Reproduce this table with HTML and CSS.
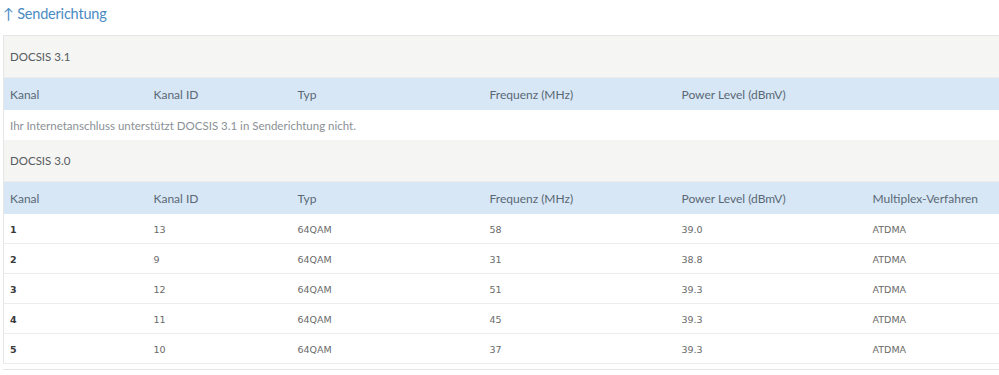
FILE: index.html
```html
<!DOCTYPE html>
<html lang="de">
<head>
<meta charset="utf-8">
<link rel="stylesheet" href="styles.css">
</head>
<body>
<div class="page">
  <h2 class="title">↑ Senderichtung</h2>
  <table class="tbl">
    <colgroup>
      <col class="c1"><col class="c2"><col class="c3"><col class="c4"><col class="c5"><col class="c6">
    </colgroup>
    <tr class="sec"><td colspan="6">DOCSIS 3.1</td></tr>
    <tr class="head"><td>Kanal</td><td>Kanal ID</td><td>Typ</td><td>Frequenz (MHz)</td><td>Power Level (dBmV)</td><td></td></tr>
    <tr class="msg"><td colspan="6">Ihr Internetanschluss unterstützt DOCSIS 3.1 in Senderichtung nicht.</td></tr>
    <tr class="sec"><td colspan="6">DOCSIS 3.0</td></tr>
    <tr class="head"><td>Kanal</td><td>Kanal ID</td><td>Typ</td><td>Frequenz (MHz)</td><td>Power Level (dBmV)</td><td>Multiplex-Verfahren</td></tr>
    <tr class="row"><td class="k">1</td><td>13</td><td>64QAM</td><td>58</td><td>39.0</td><td>ATDMA</td></tr>
    <tr class="row"><td class="k">2</td><td>9</td><td>64QAM</td><td>31</td><td>38.8</td><td>ATDMA</td></tr>
    <tr class="row"><td class="k">3</td><td>12</td><td>64QAM</td><td>51</td><td>39.3</td><td>ATDMA</td></tr>
    <tr class="row"><td class="k">4</td><td>11</td><td>64QAM</td><td>45</td><td>39.3</td><td>ATDMA</td></tr>
    <tr class="row"><td class="k">5</td><td>10</td><td>64QAM</td><td>37</td><td>39.3</td><td>ATDMA</td></tr>
  </table>
  <div class="next"></div>
</div>
</body>
</html>
```

FILE: styles.css
```css
html, body {
  margin: 0;
  padding: 0;
  background: #ffffff;
  overflow: hidden;
}
.page {
  width: 999px;
  height: 375px;
  overflow: hidden;
  padding-left: 3px;
  box-sizing: border-box;
  font-family: Lato, "Open Sans", sans-serif;
}
.title {
  margin: 0;
  padding-top: 5px;
  height: 35px;
  box-sizing: border-box;
  font-size: 14.5px;
  font-weight: normal;
  color: #4b8bc3;
  letter-spacing: -0.2px;
}
.tbl {
  width: 1010px;
  border-collapse: collapse;
  table-layout: fixed;
  border: 1px solid #e6e6e6;
}
.c1 { width: 144px; }
.c2 { width: 144px; }
.c3 { width: 192px; }
.c4 { width: 192px; }
.c5 { width: 191px; }
.c6 { width: auto; }
.tbl td {
  padding: 0 0 0 6px;
  white-space: nowrap;
  vertical-align: middle;
}
.sec td {
  height: 41px;
  background: #f5f5f3;
  font-size: 11.5px;
  color: #555b60;
  border-bottom: 1px solid #ececec;
}
.head td {
  height: 32px;
  background: #d7e7f5;
  font-size: 12px;
  color: #5a6876;
}
.msg td {
  height: 30px;
  font-size: 11.5px;
  color: #8a9096;
}
.row td {
  height: 28px;
  font-family: "DejaVu Sans", Verdana, sans-serif;
  font-size: 9.5px;
  color: #6a6a6a;
  border-bottom: 1px solid #ececec;
  padding-top: 1px;
}
.row td.k {
  color: #3a3a3a;
  font-weight: 600;
}
.next {
  margin-top: 5px;
  height: 1px;
  background: #e6e6e6;
  width: 1010px;
}
```
